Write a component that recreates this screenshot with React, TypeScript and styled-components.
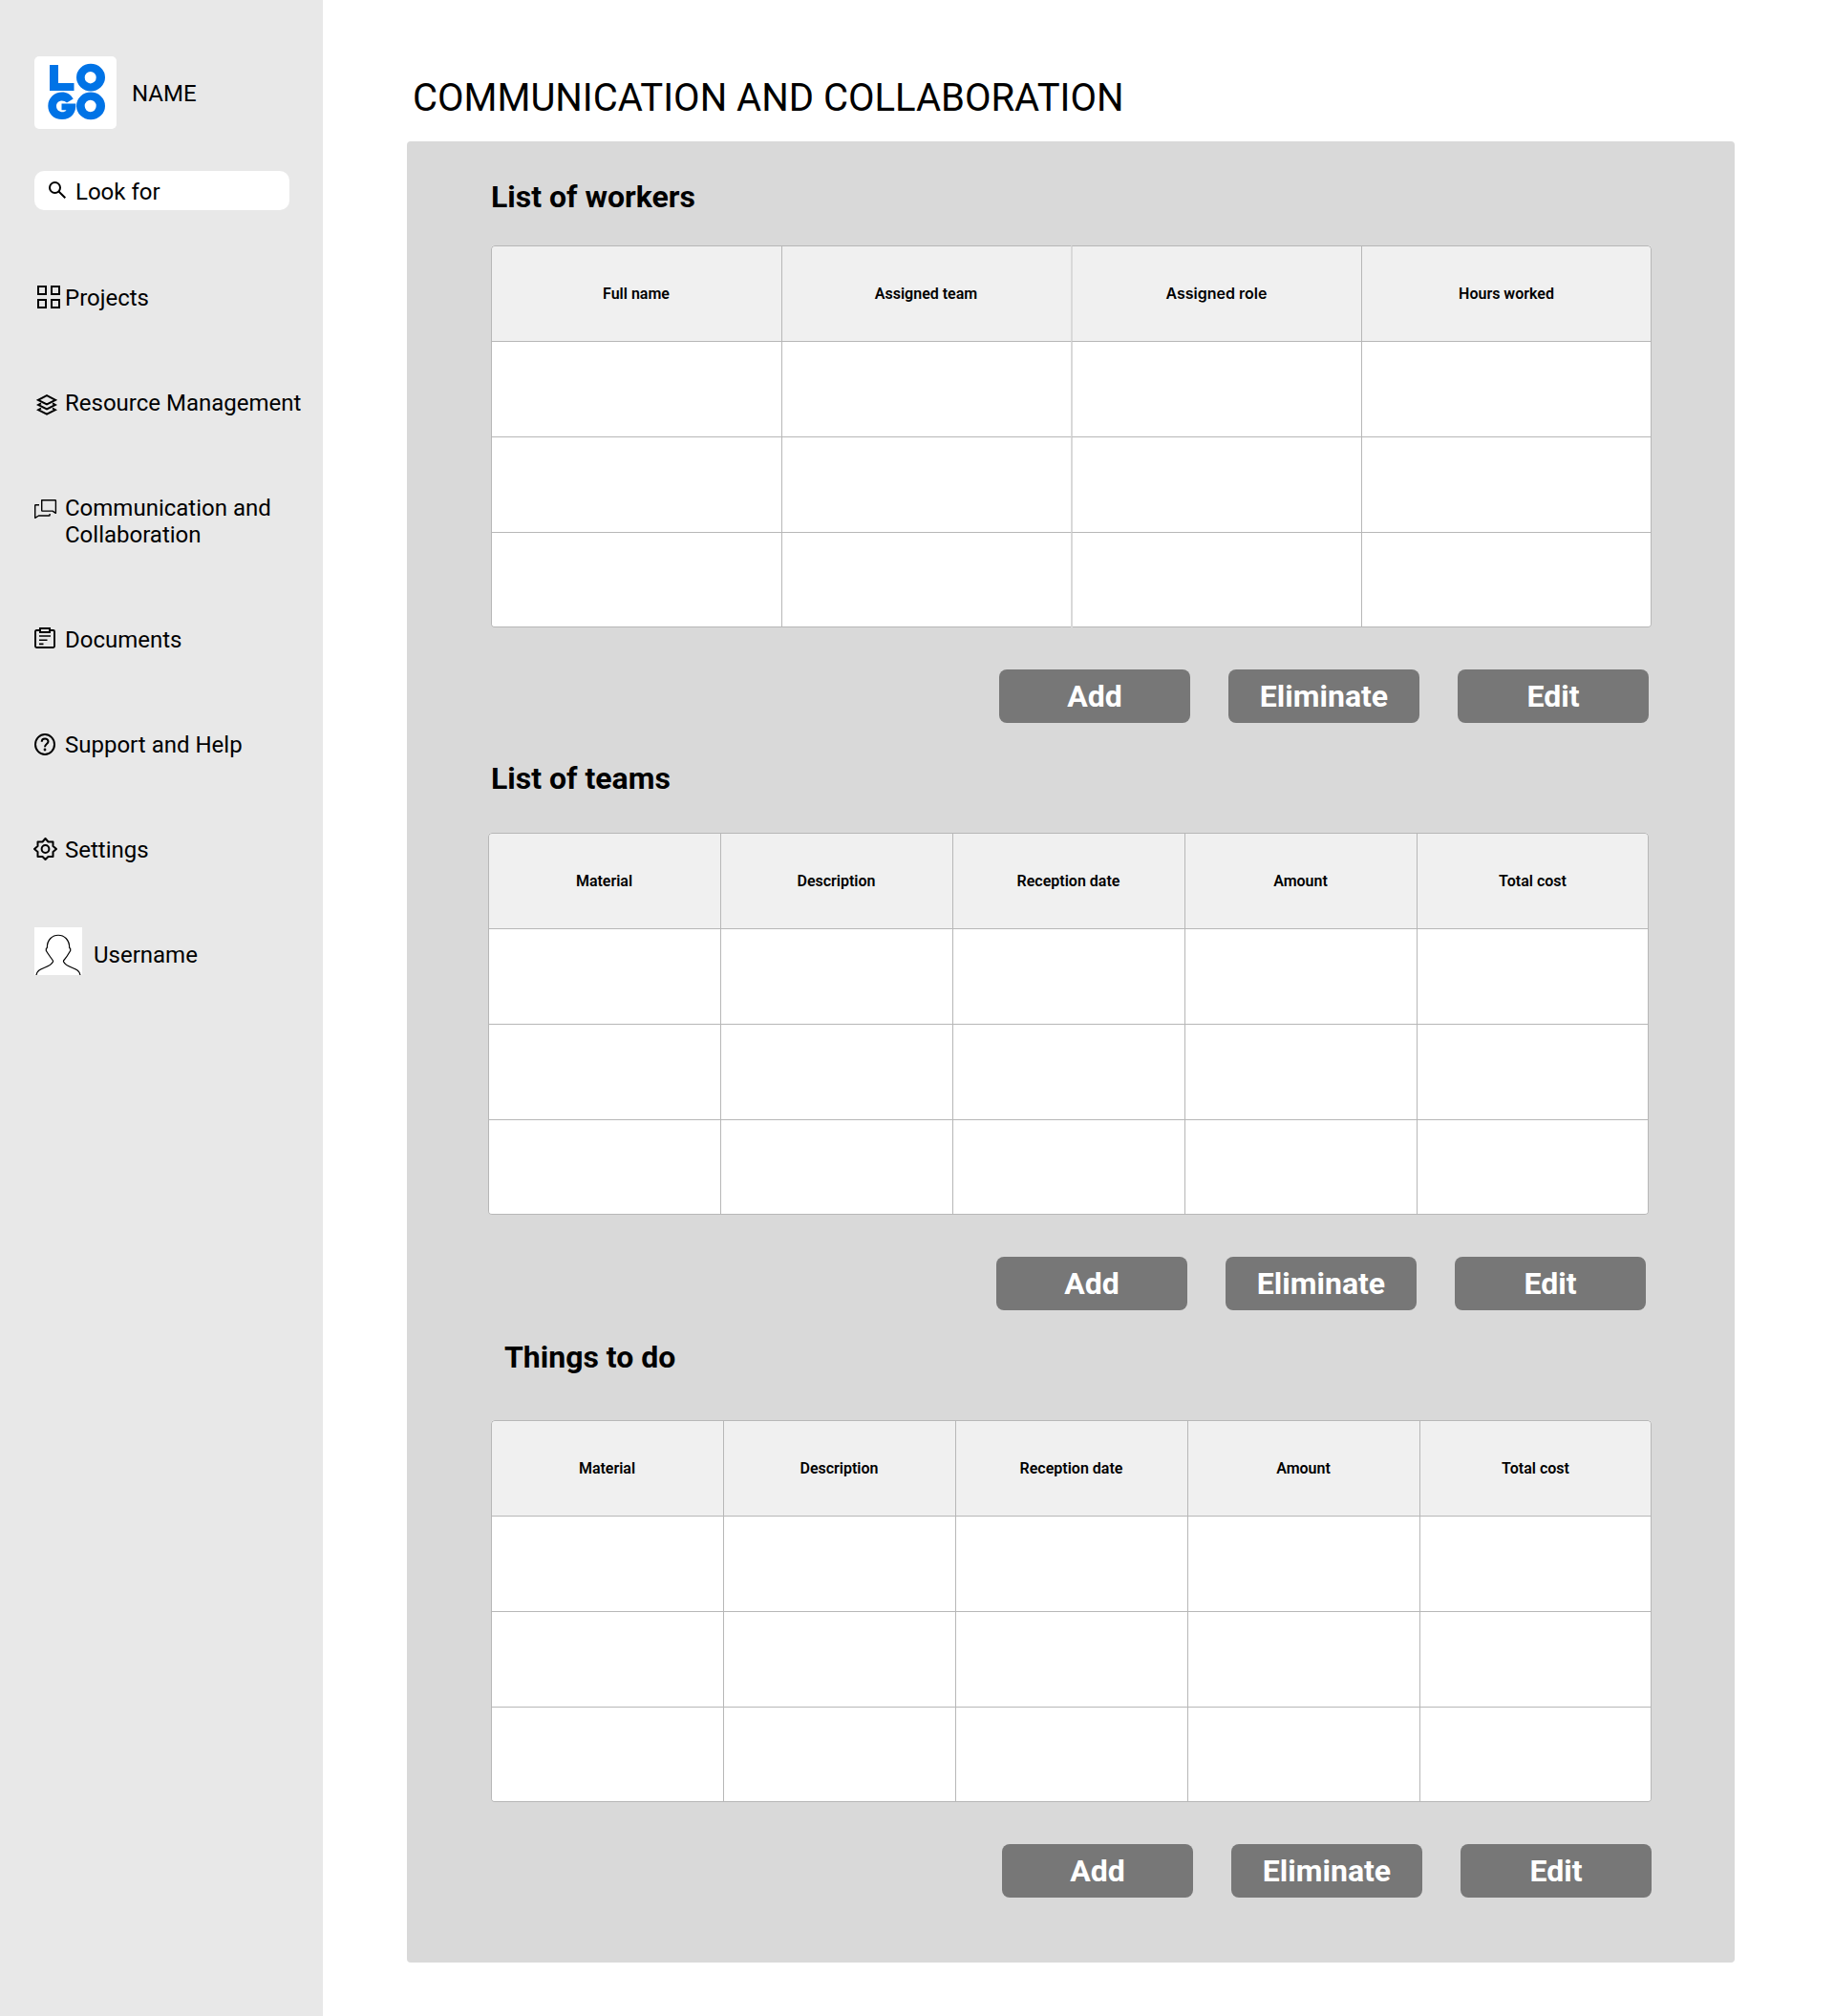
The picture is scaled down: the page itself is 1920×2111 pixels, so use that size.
import React from 'react';
import styled, { createGlobalStyle } from 'styled-components';

const GlobalStyle = createGlobalStyle`
  *, *::before, *::after { box-sizing: border-box; }
  body { margin: 0; background: #fff; font-family: Roboto, "Liberation Sans", sans-serif; color: #000; }
  h1, h2, p { margin: 0; }
  button { font-family: inherit; }
  svg { display: block; flex: none; }
`;

const Page = styled.div`
  display: flex;
  width: 1920px;
  height: 2111px;
`;

const Sidebar = styled.aside`
  display: flex;
  flex-direction: column;
  flex: none;
  width: 338px;
  padding: 59px 0 0 36px;
  background: #e8e8e8;
  font-size: 24px;
  line-height: 28px;
`;

const Brand = styled.div`
  display: flex;
  align-items: center;
  gap: 16px;

  span { padding-top: 2px; }
`;

const LogoTile = styled.div`
  display: flex;
  width: 86px;
  height: 76px;
  padding: 7px 0 0 14px;
  border-radius: 5px;
  background: #fff;
`;

const SearchBox = styled.label`
  display: flex;
  align-items: center;
  width: 267px;
  height: 41px;
  margin-top: 44px;
  padding: 2px 0 0 15px;
  border-radius: 10px;
  background: #fff;
  gap: 10px;

  svg { margin-top: -4px; }
`;

const SearchInput = styled.input`
  width: 200px;
  padding: 0;
  border: 0;
  outline: 0;
  background: transparent;
  font: inherit;
  color: #000;

  &::placeholder { color: #000; opacity: 1; }
`;

const Nav = styled.nav`
  display: flex;
  flex-direction: column;
  gap: 82px;
  margin-top: 78px;
`;

const NavItem = styled.a`
  display: grid;
  grid-template-columns: 32px 1fr;
  grid-template-rows: minmax(28px, auto);
  color: #000;
  text-decoration: none;
`;

const NavIcon = styled.span<{ $x?: number; $y?: number }>`
  display: block;
  height: 22px;
  margin: ${({ $y = 0 }) => $y}px 0 0 ${({ $x = 0 }) => $x}px;
`;

const NavLabel = styled.span`
  max-width: 250px;
  white-space: pre-line;
`;

const Profile = styled.div`
  display: flex;
  align-items: flex-start;
  gap: 12px;
  margin-top: 67px;

  span { margin-top: 15px; }
`;

const Avatar = styled.div`
  width: 50px;
  height: 50px;
  background: #fff;
`;

const Main = styled.main`
  display: flex;
  flex-direction: column;
  padding: 79px 0 0 88px;
`;

const Title = styled.h1`
  padding-left: 6px;
  font-size: 40px;
  font-weight: 400;
  line-height: 47px;
`;

const Panel = styled.div`
  width: 1390px;
  height: 1907px;
  margin-top: 22px;
  padding: 39px 0 0 85px;
  border-radius: 4px;
  background: #d9d9d9;
`;

const Section = styled.section<{ $height: number }>`
  height: ${({ $height }) => $height}px;
`;

const SectionTitle = styled.h2<{ $indent: number; $space: number }>`
  padding-left: ${({ $indent }) => $indent}px;
  margin-bottom: ${({ $space }) => $space}px;
  font-size: 32px;
  font-weight: 700;
  line-height: 38px;
`;

const Table = styled.div<{ $template: string; $indent: number }>`
  display: grid;
  grid-template-columns: ${({ $template }) => $template};
  grid-template-rows: repeat(4, 100px);
  width: 1215px;
  height: 400px;
  margin-left: ${({ $indent }) => $indent}px;
  overflow: hidden;
  border-radius: 4px;
  background: #fff;
  box-shadow: inset 0 -1px #b7b7b7;
`;

const Cell = styled.div<{ $header?: boolean; $last?: boolean; $soft?: boolean; $corner?: string }>`
  display: flex;
  align-items: center;
  justify-content: center;
  padding-right: ${({ $last }) => ($last ? 0 : 1)}px;
  border-top: 1px solid #b7b7b7;
  border-left: ${({ $soft }) => ($soft ? '2px solid #d9d9d9' : '1px solid #b7b7b7')};
  border-right: ${({ $last }) => ($last ? '1px solid #b7b7b7' : '0')};
  border-radius: ${({ $corner }) => $corner ?? '0'};
  background: ${({ $header }) => ($header ? '#f0f0f0' : 'transparent')};
  font-family: ${({ $soft }) => ($soft ? 'Inter, Roboto, sans-serif' : 'inherit')};
  font-size: 16px;
  font-weight: 600;
  line-height: 19px;
`;

const Actions = styled.div<{ $indent: number }>`
  display: flex;
  gap: 40px;
  margin: 44px 0 0 ${({ $indent }) => $indent}px;
`;

const ActionButton = styled.button`
  width: 200px;
  height: 56px;
  padding: 0;
  border: 0;
  border-radius: 8px;
  background: #777;
  color: #fff;
  font-size: 32px;
  font-weight: 700;
  line-height: 38px;
`;

const Logo = () => (
  <svg width="62" height="62" viewBox="0 0 62 62" fill="#0073e6">
    <path d="M2 2h9v19h16.500v8H2z" />
    <path fillRule="evenodd" d="M45 .8a15 14.300 0 1 1 0 28.600a15 14.300 0 1 1 0-28.600zm-.3 8.200a6 6.200 0 1 0 0 12.400a6 6.200 0 1 0 0-12.400z" />
    <path d="M26.700 37.500 20 41.600C16 37.500 9 39.500 9 45c0 6.500 8 8 10.500 4.200H14.500v-6.700H29.300C30 51.500 25 59 15 59C6 59 .3 52.500.3 44.900C.3 36.500 7 30.500 15 30.500c5 0 9.300 2.500 11.700 7z" />
    <path fillRule="evenodd" d="M45 30.600a15 14.300 0 1 1 0 28.600a15 14.300 0 1 1 0-28.600zm-.3 8.200a6 6.200 0 1 0 0 12.400a6 6.200 0 1 0 0-12.400z" />
  </svg>
);

const SearchIcon = () => (
  <svg width="18" height="18" viewBox="0 0 18 18" fill="none" stroke="#000" strokeWidth="2">
    <circle cx="6.500" cy="6.500" r="5.500" />
    <path d="M10.500 10.500 17.300 17.300" />
  </svg>
);

const ProjectsIcon = () => (
  <svg width="24" height="24" fill="none" stroke="#000" strokeWidth="2">
    <path d="M1 1h8v8H1zM15 1h8v8h-8zM1 15h8v8H1zM15 15h8v8h-8z" />
  </svg>
);

const ResourceIcon = () => (
  <svg width="22" height="22" fill="none" stroke="#000" strokeWidth="2">
    <path d="M11 1.200 20 5.800 11 10.400 2 5.800zM5 9.300 2 11l9 4.500 9-4.500-3-1.700M5 14.500 2 16.200l9 4.500 9-4.500-3-1.700" />
  </svg>
);

const ChatIcon = () => (
  <svg width="24" height="21" fill="none" stroke="#000" strokeWidth="1.400" strokeLinejoin="round">
    <path d="M7.700.7H21.800q.6 0 .6.600V14.300L19 12.100H8.300q-.6 0-.6-.6zM5 5.700H1.300q-.6 0-.6.600V19.300L4.500 17H15.300q.8 0 .8-.8V15" />
  </svg>
);

const DocumentIcon = () => (
  <svg width="22" height="22" fill="none" stroke="#000" strokeWidth="1.900">
    <path d="M6 3H2.200Q1 3 1 4.200V19.800Q1 21 2.200 21H19.800Q21 21 21 19.800V4.200Q21 3 19.800 3H16M6 1H16V5H6z" />
    <path strokeWidth="1.600" d="M5 9H17M5 13.200H13.500M5 17.400H9.500" />
  </svg>
);

const HelpIcon = () => (
  <svg width="22" height="23" fill="none" stroke="#000" strokeWidth="2">
    <ellipse cx="11" cy="11.500" rx="10" ry="10.500" />
    <path d="M7.700 8.700C7.700 4.300 14.500 4.500 14.500 8.500C14.500 11 11 11.200 11 14.200" />
    <circle cx="11" cy="17" r="1.400" fill="#000" stroke="none" />
  </svg>
);

const SettingsIcon = () => (
  <svg width="25" height="24" fill="none" stroke="#000" strokeWidth="2" strokeLinejoin="round">
    <path d="M12.500 1 15.500 4.500H20.500V9L24 12 20.500 15V20H15.500L12.500 23 9.500 20H4.500V15L1 12 4.500 9V4.500H9.500z" />
    <circle cx="12.500" cy="12" r="3.900" />
  </svg>
);

const AvatarIcon = () => (
  <svg width="50" height="50" fill="none" stroke="#000" strokeWidth="1.200">
    <path d="M2 50C3 41.500 16 43.500 19.500 36V35C16 30 14 27.500 12.300 24.500V22.500L13.300 21.500C13.300 3.800 36.700 3.800 36.700 21.500L37.700 22.500V24.500C36 27.500 34 31 30.500 35V36C34 43.500 47 41.500 48 50" />
  </svg>
);

const navItems = [
  { label: 'Projects', icon: <ProjectsIcon />, x: 3, y: 1 },
  { label: 'Resource Management', icon: <ResourceIcon />, x: 2, y: 5 },
  { label: 'Communication and\nCollaboration', icon: <ChatIcon />, x: 0, y: 5 },
  { label: 'Documents', icon: <DocumentIcon />, x: 0, y: 1 },
  { label: 'Support and Help', icon: <HelpIcon />, x: 0, y: 2 },
  { label: 'Settings', icon: <SettingsIcon />, x: -1, y: 1 },
];

const fiveColumns = 'repeat(5, 243px)';
const materialColumns = ['Material', 'Description', 'Reception date', 'Amount', 'Total cost'];

const sections = [
  {
    title: 'List of workers',
    columns: ['Full name', 'Assigned team', 'Assigned role', 'Hours worked'],
    template: '304px 303px 304px 304px', roleColumn: 2,
    titleIndent: 3, tableIndent: 3, actionsIndent: 535, space: 32, height: 609,
  },
  {
    title: 'List of teams',
    columns: materialColumns,
    template: fiveColumns,
    titleIndent: 3, tableIndent: 0, actionsIndent: 532, space: 38, height: 606,
  },
  {
    title: 'Things to do',
    columns: materialColumns,
    template: fiveColumns,
    titleIndent: 17, tableIndent: 3, actionsIndent: 538, space: 47, height: 585,
  },
];

function cornerRadius(row: number, column: number, last: number) {
  if (row === 0 && column === 0) return '4px 0 0 0';
  if (row === 0 && column === last) return '0 4px 0 0';
  if (row === 3 && column === 0) return '0 0 0 4px';
  if (row === 3 && column === last) return '0 0 4px 0';
  return undefined;
}

export default function App() {
  return (
    <>
      <GlobalStyle />
      <Page>
        <Sidebar>
          <Brand>
            <LogoTile><Logo /></LogoTile>
            <span>NAME</span>
          </Brand>
          <SearchBox>
            <SearchIcon />
            <SearchInput placeholder="Look for" />
          </SearchBox>
          <Nav>
            {navItems.map((item) => (
              <NavItem key={item.label}>
                <NavIcon $x={item.x} $y={item.y}>{item.icon}</NavIcon>
                <NavLabel>{item.label}</NavLabel>
              </NavItem>
            ))}
          </Nav>
          <Profile>
            <Avatar><AvatarIcon /></Avatar>
            <span>Username</span>
          </Profile>
        </Sidebar>
        <Main>
          <Title>COMMUNICATION AND COLLABORATION</Title>
          <Panel>
            {sections.map((section) => {
              const last = section.columns.length - 1;
              return (
                <Section key={section.title} $height={section.height}>
                  <SectionTitle $indent={section.titleIndent} $space={section.space}>{section.title}</SectionTitle>
                  <Table $template={section.template} $indent={section.tableIndent}>
                    {[0, 1, 2, 3].map((row) => section.columns.map((column, i) => (
                      <Cell
                        key={`${row}-${column}`}
                        $header={row === 0}
                        $last={i === last}
                        $soft={i === section.roleColumn}
                        $corner={cornerRadius(row, i, last)}
                      >
                        {row === 0 ? column : null}
                      </Cell>
                    )))}
                  </Table>
                  <Actions $indent={section.actionsIndent}>
                    <ActionButton>Add</ActionButton>
                    <ActionButton>Eliminate</ActionButton>
                    <ActionButton>Edit</ActionButton>
                  </Actions>
                </Section>
              );
            })}
          </Panel>
        </Main>
      </Page>
    </>
  );
}
